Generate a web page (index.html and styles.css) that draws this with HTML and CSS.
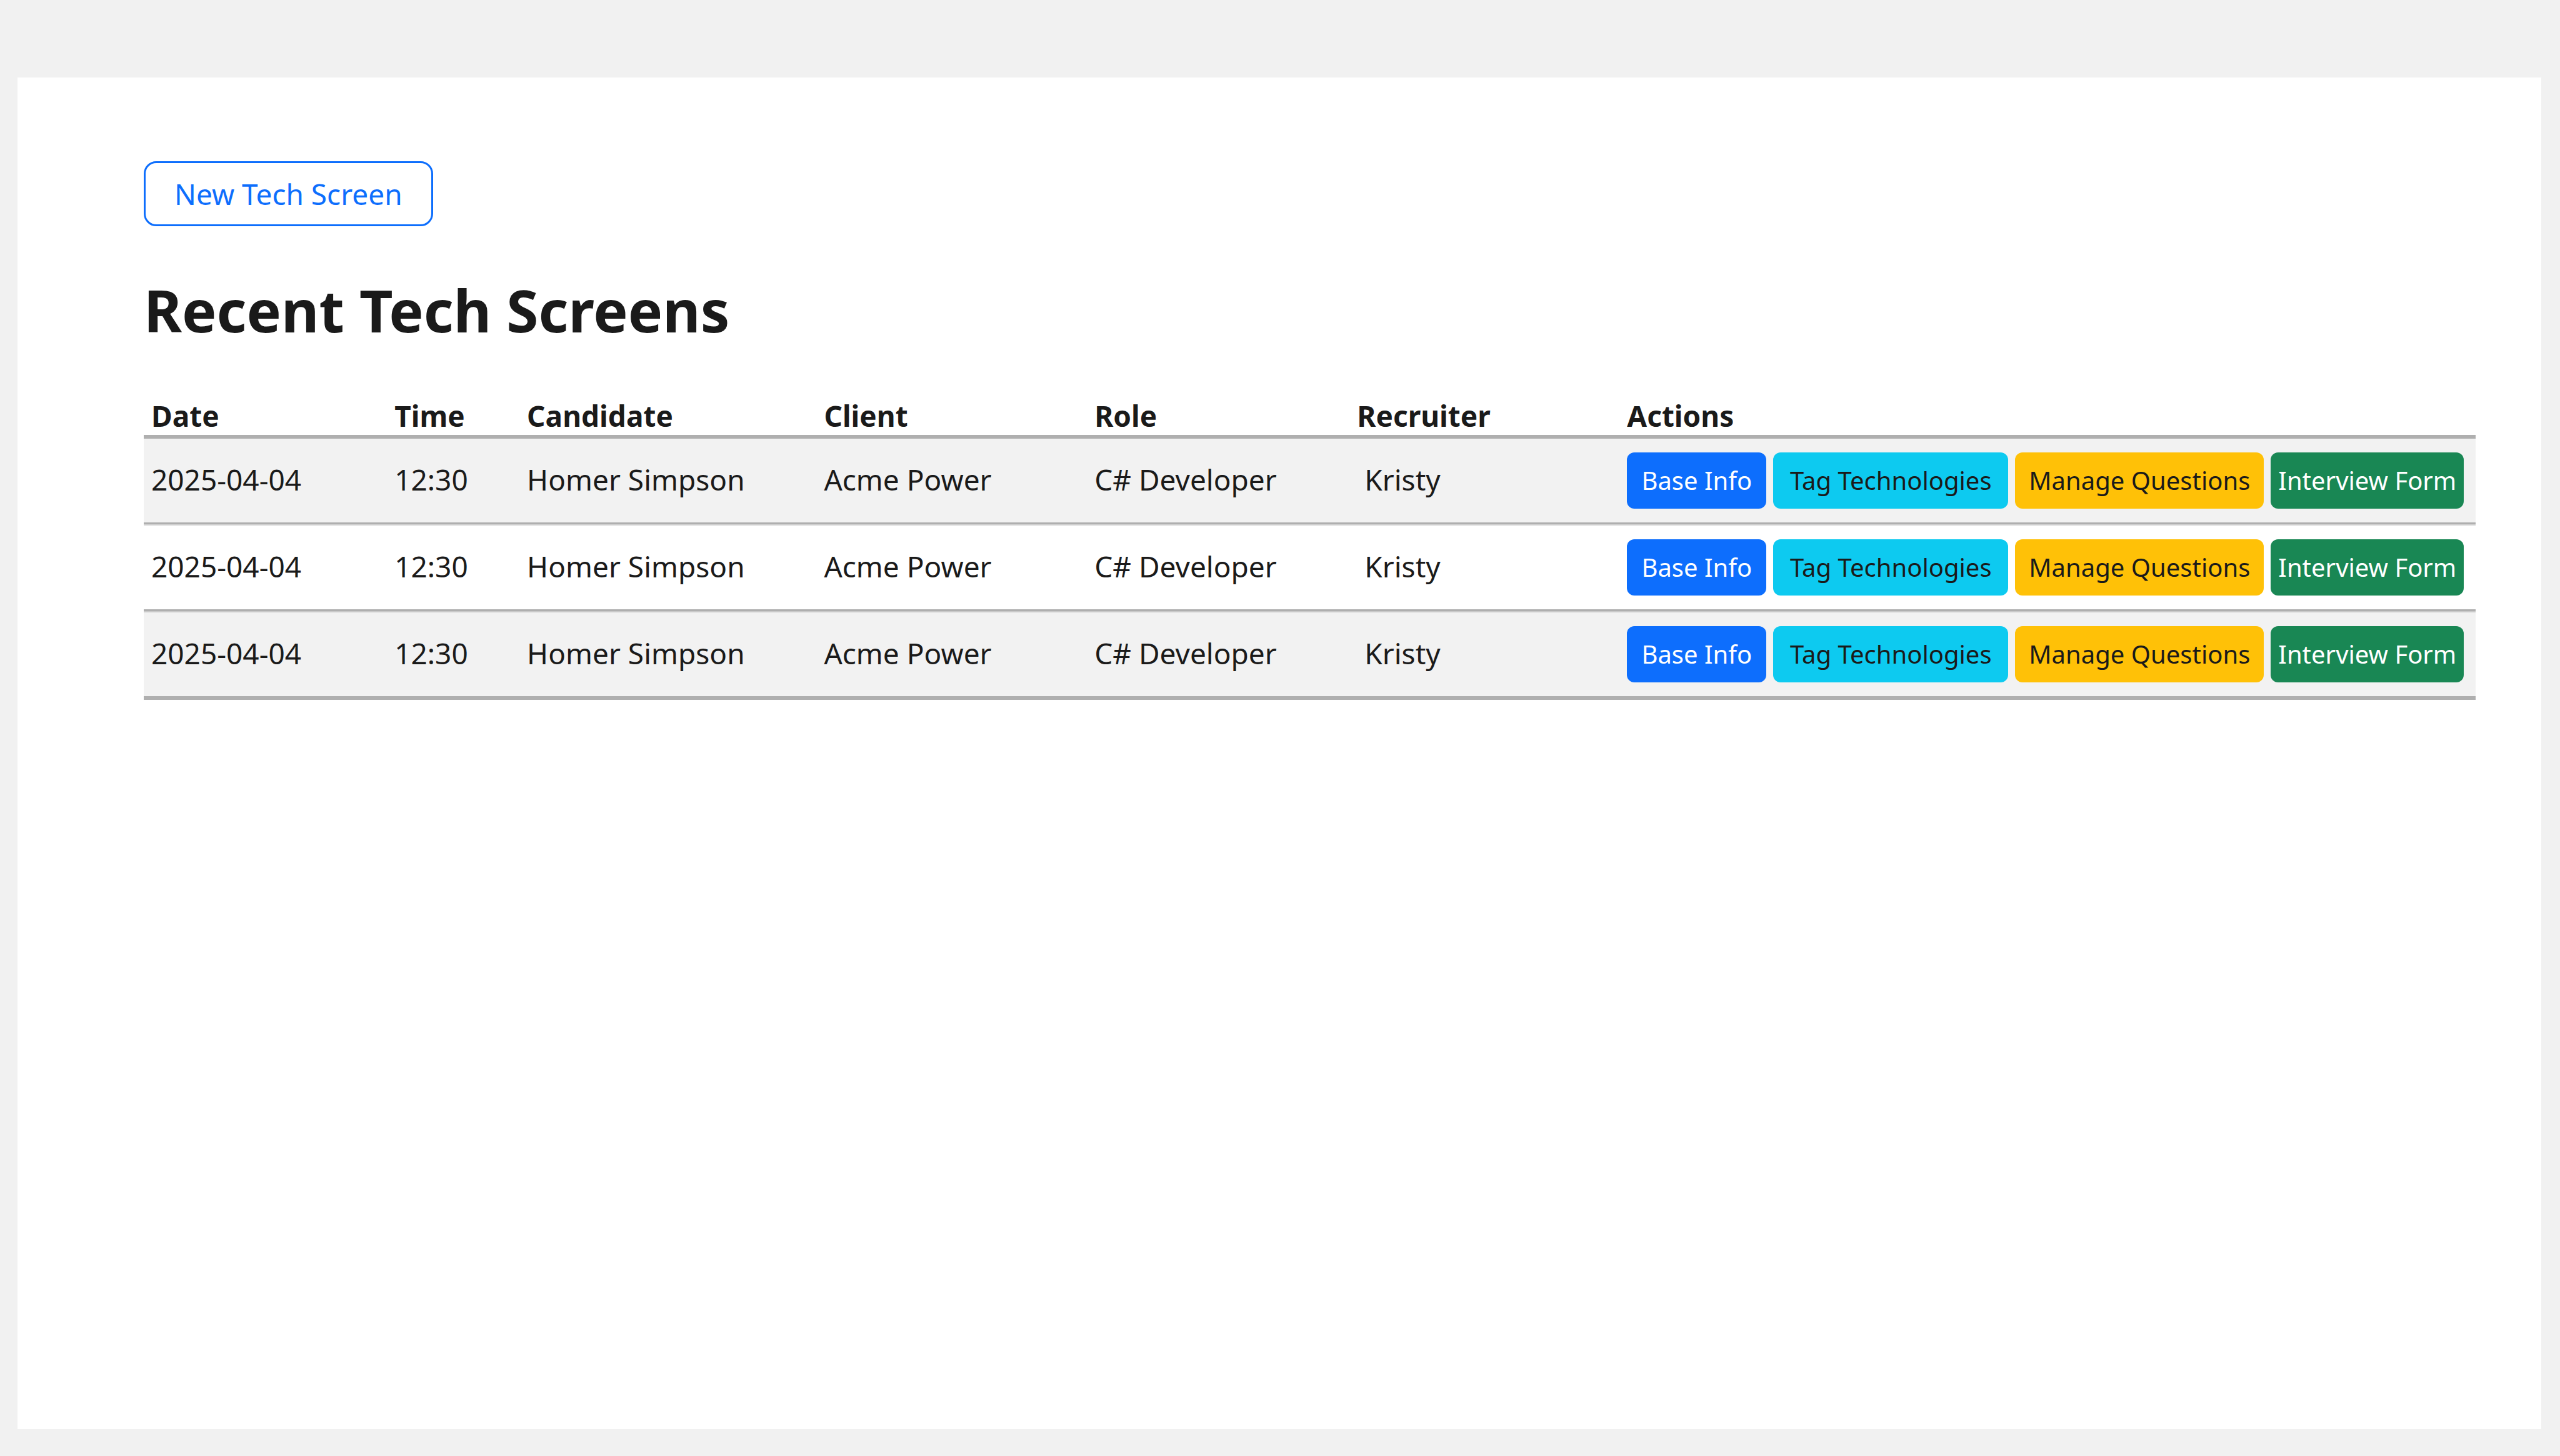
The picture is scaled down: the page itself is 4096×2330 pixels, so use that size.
FILE: index.html
```html
<!DOCTYPE html>
<html lang="en">
<head>
<meta charset="utf-8">
<title>Recent Tech Screens</title>
<link rel="stylesheet" href="styles.css">
</head>
<body>
<main class="panel">
  <button type="button" class="btn-new">New Tech Screen</button>
  <h1 class="title">Recent Tech Screens</h1>
  <table class="screens">
    <colgroup>
      <col class="col-date"><col class="col-time"><col class="col-candidate"><col class="col-client"><col class="col-role"><col class="col-recruiter"><col>
    </colgroup>
    <thead>
      <tr>
        <th scope="col">Date</th><th scope="col">Time</th><th scope="col">Candidate</th><th scope="col">Client</th><th scope="col">Role</th><th scope="col">Recruiter</th><th scope="col">Actions</th>
      </tr>
    </thead>
    <tbody>
      <tr>
        <td>2025-04-04</td><td>12:30</td><td>Homer Simpson</td><td>Acme Power</td><td>C# Developer</td><td class="recruiter">Kristy</td>
        <td class="actions-cell">
          <div class="actions">
            <button type="button" class="btn btn-info">Base Info</button>
            <button type="button" class="btn btn-tag">Tag Technologies</button>
            <button type="button" class="btn btn-manage">Manage Questions</button>
            <button type="button" class="btn btn-form">Interview Form</button>
          </div>
        </td>
      </tr>
      <tr>
        <td>2025-04-04</td><td>12:30</td><td>Homer Simpson</td><td>Acme Power</td><td>C# Developer</td><td class="recruiter">Kristy</td>
        <td class="actions-cell">
          <div class="actions">
            <button type="button" class="btn btn-info">Base Info</button>
            <button type="button" class="btn btn-tag">Tag Technologies</button>
            <button type="button" class="btn btn-manage">Manage Questions</button>
            <button type="button" class="btn btn-form">Interview Form</button>
          </div>
        </td>
      </tr>
      <tr>
        <td>2025-04-04</td><td>12:30</td><td>Homer Simpson</td><td>Acme Power</td><td>C# Developer</td><td class="recruiter">Kristy</td>
        <td class="actions-cell">
          <div class="actions">
            <button type="button" class="btn btn-info">Base Info</button>
            <button type="button" class="btn btn-tag">Tag Technologies</button>
            <button type="button" class="btn btn-manage">Manage Questions</button>
            <button type="button" class="btn btn-form">Interview Form</button>
          </div>
        </td>
      </tr>
    </tbody>
  </table>
</main>
</body>
</html>
```
FILE: styles.css
```css
* {
  box-sizing: border-box;
}

body {
  margin: 0;
  min-height: 100vh;
  padding: 124px 30px 43px 28px;
  display: flex;
  background: #f1f1f1;
  color: #1a1a1a;
  font-family: "Noto Sans", sans-serif;
  font-size: 46px;
}

.panel {
  flex: 1;
  padding: 134px 105px 134px 202px;
  background: #fff;
}

button {
  font-family: inherit;
  cursor: pointer;
}

.btn-new {
  display: block;
  padding: 17px 46px;
  border: 3px solid #0d6efd;
  border-radius: 20px;
  background: #fff;
  color: #0d6efd;
  font-size: 46px;
  line-height: 64px;
}

.title {
  margin: 74px 0 78px;
  font-size: 93px;
  font-weight: 700;
  line-height: 120px;
}

.screens {
  width: 100%;
  table-layout: fixed;
  border-collapse: separate;
  border-spacing: 0;
}

.col-date { width: 10.43%; }
.col-time { width: 5.68%; }
.col-candidate { width: 12.74%; }
.col-client { width: 11.6%; }
.col-role { width: 11.26%; }
.col-recruiter { width: 11.58%; }

.screens th {
  padding: 0 12px;
  border-bottom: 6px solid #afafaf;
  font-weight: 700;
  line-height: 62px;
  text-align: left;
}

.screens td {
  padding: 20px 12px 24px;
  border-bottom: 3px solid #afafaf;
  line-height: 62px;
  white-space: nowrap;
}

/* rows after the first carry a faint second rule under the separator */
.screens tbody tr + tr td {
  border-top: 2px solid rgba(0, 0, 0, 0.17);
}

.screens tbody tr:last-child td {
  border-bottom-width: 6px;
}

.screens tbody tr:nth-child(odd) {
  background: #f2f2f2;
}

.screens .recruiter {
  padding-left: 24px;
}

.screens .actions-cell {
  padding: 22px 12px;
}

.actions {
  display: flex;
  gap: 11px;
}

.btn {
  height: 90px;
  padding: 0 0 2px;
  border: 0;
  border-radius: 12px;
  font-size: 40px;
  white-space: nowrap;
}

.btn-info {
  width: 223px;
  background: #0d6efd;
  color: #fff;
}

.btn-tag {
  width: 376px;
  background: #0dcaf0;
  color: #1a1a1a;
}

.btn-manage {
  width: 398px;
  background: #ffc107;
  color: #1a1a1a;
}

.btn-form {
  width: 309px;
  background: #198754;
  color: #fff;
}
```
